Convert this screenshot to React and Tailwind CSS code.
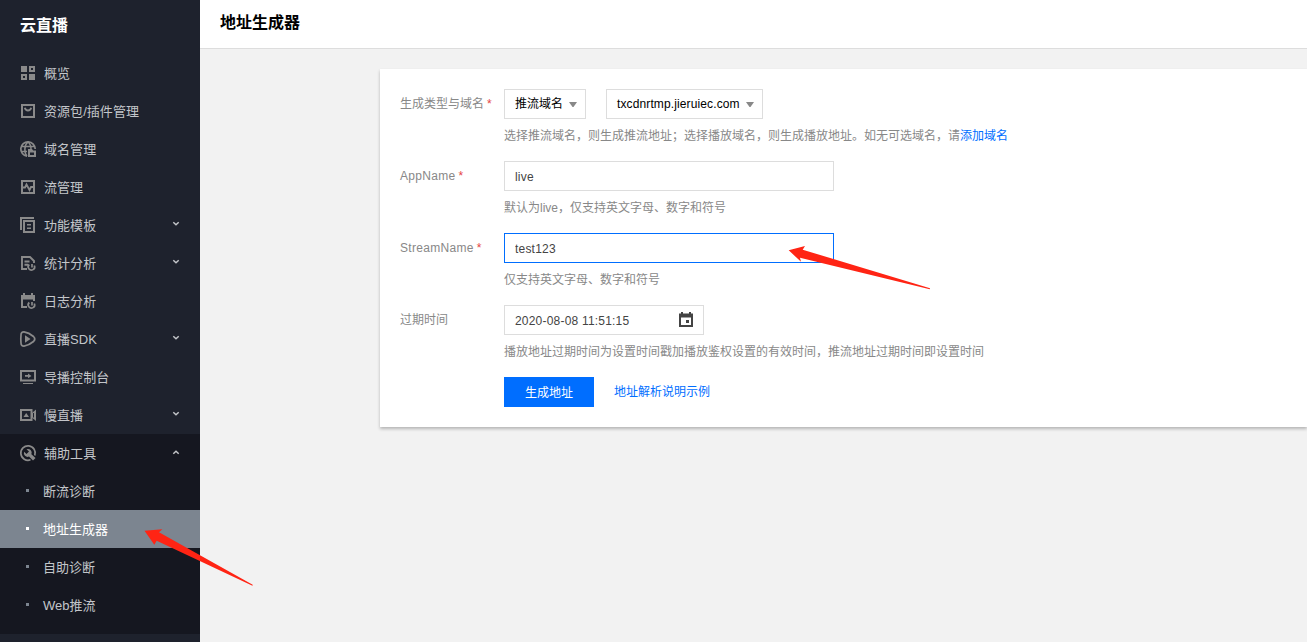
import React, { useState } from "react";
import clsx from "clsx";

const Icon = ({ children }) => (
  <svg
    width="16"
    height="16"
    viewBox="0 0 16 16"
    fill="none"
    stroke="#8a8a8a"
    strokeWidth="2"
    className="shrink-0 overflow-visible"
  >
    {children}
  </svg>
);

const OverviewIcon = () => (
  <Icon>
    <path
      d="M1 1h6v6H1zM9 9h6v6H9zM9 1h6v6H9zM11 3v2h2V3zM1 9h6v6H1zM3 11v2h2v-2z"
      fill="#8a8a8a"
      fillRule="evenodd"
      stroke="none"
    />
  </Icon>
);

const PackageIcon = () => (
  <Icon>
    <path d="M2 2h12v12H2z" />
    <path d="M4.800 4.800c.5 1.900 1.700 2.700 3.200 2.700s2.700-.8 3.200-2.700" strokeWidth="1.800" />
  </Icon>
);

const DomainIcon = () => (
  <Icon>
    <path d="M7 15.200A7.200 7.200 0 1 1 15.200 8M1 5.500h14M1 10.500h6" strokeWidth="1.700" />
    <path d="M7 15C4 12 4 4 8 1c2 1.600 3 4 3 7" strokeWidth="1.500" />
    <path
      d="M8 8h4l1.200 1.500H16V16H8zM10 11.500v2.500h4v-2.500z"
      fill="#8a8a8a"
      fillRule="evenodd"
      stroke="none"
    />
  </Icon>
);

const StreamIcon = () => (
  <Icon>
    <path d="M2 2h12v12H2z" />
    <path d="M3 8.500h2l1.500-3 3 5.500 1.500-3h2" strokeWidth="1.800" />
  </Icon>
);

const TemplateIcon = () => (
  <Icon>
    <path d="M1 13V1h13" />
    <path d="M4 4h10v11H4z" />
    <path d="M7 7.800h4M7 11.200h4" strokeWidth="1.600" />
  </Icon>
);

const StatsIcon = () => (
  <Icon>
    <path d="M7 14H2V2h8l4 4v2M4.500 6.500h5M4.500 9.800h3.500" strokeWidth="1.900" />
    <path d="M9.300 9.500a3.200 3.200 0 1 0 5 1M12 9v3.500" strokeWidth="1.700" />
  </Icon>
);

const LogIcon = () => (
  <Icon>
    <path
      d="M1 2h14v6h-2V6.500H3V13h4v2H1zM3 0h2v3H3zM11 0h2v3h-2z"
      fill="#8a8a8a"
      stroke="none"
    />
    <path d="M9.300 9.500a3.200 3.200 0 1 0 5 1M12 9v3.500" strokeWidth="1.700" />
  </Icon>
);

const SdkIcon = () => (
  <Icon>
    <path
      d="M1 4Q1 .8 4 .9q5 .8 9.500 4.600Q16 8 13.500 10.500 9 14.300 4 15.100 1 15.200 1 12Q.6 8 1 4z"
      strokeWidth="1.700"
    />
    <path d="M5 4.200 10.500 8 5 11.800z" fill="#8a8a8a" stroke="none" />
  </Icon>
);

const ConsoleIcon = () => (
  <Icon>
    <path d="M1 2h14v9.500H1z" />
    <path d="M3 14.500h10" strokeWidth="1" />
    <path d="M5 6h3V4.500L11.500 7 8 9.300V7.700H5z" fill="#8a8a8a" stroke="none" />
  </Icon>
);

const SlowLiveIcon = () => (
  <Icon>
    <path d="M1 3h10.500v10H1z" />
    <path
      d="m3.500 10 2.700-4L9 10zM12 6l4-3.500v11.500L12 10.500z"
      fill="#8a8a8a"
      stroke="none"
    />
    <path d="M13.500 6v4.500" stroke="#1e222d" strokeWidth="1" />
  </Icon>
);

const ToolIcon = () => (
  <Icon>
    <path d="M10.500 14.800A7.200 7.200 0 1 1 14.800 10.500" strokeWidth="1.700" />
    <path
      d="M6.500 4.200a3.800 3.800 0 0 1 4.900 5L15.500 13 13 15.500 9 11.600a3.800 3.800 0 0 1-4.900-4.900L6.500 9 9 6.600z"
      fill="#8a8a8a"
      stroke="none"
    />
  </Icon>
);

const menu = [
  { text: "概览", icon: OverviewIcon },
  { text: "资源包/插件管理", icon: PackageIcon },
  { text: "域名管理", icon: DomainIcon },
  { text: "流管理", icon: StreamIcon },
  { text: "功能模板", icon: TemplateIcon, sub: true },
  { text: "统计分析", icon: StatsIcon, sub: true },
  { text: "日志分析", icon: LogIcon },
  { text: "直播SDK", icon: SdkIcon, sub: true },
  { text: "导播控制台", icon: ConsoleIcon },
  { text: "慢直播", icon: SlowLiveIcon, sub: true },
];

const tools = ["断流诊断", "地址生成器", "自助诊断", "Web推流"];

const Chevron = ({ up }) => (
  <svg
    width="8"
    height="6"
    viewBox="0 0 8 6"
    fill="none"
    stroke="#c3c5c9"
    strokeWidth="1.5"
    className={clsx("mb-0.5 ml-auto", up && "rotate-180")}
  >
    <path d="m1.300 1.300 2.700 2.500 2.700-2.500" />
  </svg>
);

const MenuItem = ({ item, open }) => {
  const ItemIcon = item.icon;
  return (
    <div className="flex h-[38px] cursor-pointer items-center pl-5 pr-5">
      <ItemIcon />
      <span className="ml-2 pt-px tracking-[0.05px]">{item.text}</span>
      {item.sub && <Chevron up={open} />}
    </div>
  );
};

const Sidebar = () => {
  const [active, setActive] = useState("地址生成器");

  return (
    <aside className="w-[200px] shrink-0 bg-[#1e222d] text-[13px] text-[#c3c6ca]">
      <h2 className="flex h-[54px] items-center pb-0.5 pl-5 text-base font-bold text-white">
        云直播
      </h2>
      {menu.map((item) => (
        <MenuItem key={item.text} item={item} />
      ))}
      <div className="bg-[#151720] pb-[10px]">
        <MenuItem item={{ text: "辅助工具", icon: ToolIcon, sub: true }} open />
        {tools.map((text) => (
          <div
            key={text}
            onClick={() => setActive(text)}
            className={clsx(
              "flex h-[38px] cursor-pointer items-center pl-[26px]",
              active === text && "bg-[#7c8590] text-white"
            )}
          >
            <i
              className={clsx(
                "mb-px size-[3px]",
                active === text ? "bg-white" : "bg-[#7c8590]"
              )}
            />
            <span className="ml-[14px] pt-px">{text}</span>
          </div>
        ))}
      </div>
    </aside>
  );
};

const Field = ({ label, required, hint, children }) => (
  <div className="flex h-[72px]">
    <label className="w-[104px] shrink-0 leading-[31px] text-[#888]">
      {label}
      {required && <span className="ml-[3px] text-[#e54545]">*</span>}
    </label>
    <div>
      <div className="flex h-[30px]">{children}</div>
      <p className="whitespace-nowrap pt-2 leading-[18px] text-[#888]">{hint}</p>
    </div>
  </div>
);

const Select = ({ children, className }) => (
  <button
    className={clsx(
      "flex h-[30px] items-center justify-between border border-[#ddd] bg-white pl-2.5 pr-2 text-black",
      className
    )}
  >
    <span className="whitespace-nowrap">{children}</span>
    <svg width="8" height="5" viewBox="0 0 8 5" fill="#888">
      <path d="M0 0h8L4.500 5h-1z" />
    </svg>
  </button>
);

const inputClass =
  "h-[30px] border bg-white px-2.5 pt-px tracking-[0.2px] text-[#444] outline-none";

const Arrow = ({ className, points, width, height }) => (
  <svg
    width={width}
    height={height}
    viewBox={`0 0 ${width} ${height}`}
    className={clsx("pointer-events-none absolute", className)}
  >
    <polygon points={points} fill="#ff2414" />
  </svg>
);

const App = () => {
  const [appName, setAppName] = useState("live");
  const [streamName, setStreamName] = useState("test123");
  const [expire, setExpire] = useState("2020-08-08 11:51:15");

  return (
    <div className="relative flex h-[642px] overflow-hidden bg-[#f2f2f2] font-['Liberation_Sans','Noto_Sans_CJK_SC',sans-serif]">
      <Sidebar />
      <main className="min-w-0 flex-1">
        <header className="flex h-[49px] items-center border-b border-[#ddd] bg-white pb-0.5 pl-5">
          <h1 className="text-base font-bold text-black">地址生成器</h1>
        </header>

        <section className="ml-[180px] mt-5 h-[358px] bg-white pl-5 pt-5 text-xs shadow-[0_2px_3px_rgba(0,0,0,0.25)]">
          <Field
            label="生成类型与域名"
            required
            hint={
              <>
                选择推流域名，则生成推流地址；选择播放域名，则生成播放地址。如无可选域名，请
                <a className="text-[#006eff]">添加域名</a>
              </>
            }
          >
            <Select className="mr-5 w-[82px]">推流域名</Select>
            <Select className="w-[157px] tracking-[0.12px]">txcdnrtmp.jieruiec.com</Select>
          </Field>

          <Field
            label={<span className="tracking-[0.3px]">AppName</span>}
            required
            hint="默认为live，仅支持英文字母、数字和符号"
          >
            <input
              className={clsx(inputClass, "w-[330px] border-[#ddd]")}
              value={appName}
              onChange={(e) => setAppName(e.target.value)}
            />
          </Field>

          <Field
            label={<span className="tracking-[0.3px]">StreamName</span>}
            required
            hint="仅支持英文字母、数字和符号"
          >
            <input
              className={clsx(inputClass, "w-[330px] border-[#006eff]")}
              value={streamName}
              onChange={(e) => setStreamName(e.target.value)}
            />
          </Field>

          <Field
            label="过期时间"
            hint="播放地址过期时间为设置时间戳加播放鉴权设置的有效时间，推流地址过期时间即设置时间"
          >
            <div className="flex h-[30px] w-[200px] items-center justify-between border border-[#ddd] pr-[10px]">
              <input
                className="w-[150px] pl-2.5 pt-px tracking-[0.2px] text-[#444] outline-none"
                value={expire}
                onChange={(e) => setExpire(e.target.value)}
              />
              <svg width="14" height="15" viewBox="0 0 14 15" fill="#444" className="mb-px">
                <path
                  fillRule="evenodd"
                  d="M0 1.500h2V0h2v1.500h6V0h2v1.500h2V15H0zM2 5.500V13h10V5.500zM7 8h3v3H7z"
                />
              </svg>
            </div>
          </Field>

          <div className="flex items-center pl-[104px]">
            <button className="h-[30px] w-[90px] bg-[#006eff] pt-px text-white">
              生成地址
            </button>
            <a className="ml-5 text-[#006eff]">地址解析说明示例</a>
          </div>
        </section>
      </main>

      {/* pointers to the menu entry and the stream name */}
      <Arrow
        className="left-[144px] top-[529px]"
        width={110}
        height={58}
        points="0.500,1.700 18.300,0.300 15,3.300 108.700,55.800 108.500,56.700 12.700,11.700 10.300,15.700"
      />
      <Arrow
        className="left-[788px] top-[245px]"
        width={143}
        height={45}
        points="0.700,5.300 17,1 14.700,4.700 142,43.300 141.800,44.200 12,12.700 13,16.700"
      />
    </div>
  );
};

export default App;
